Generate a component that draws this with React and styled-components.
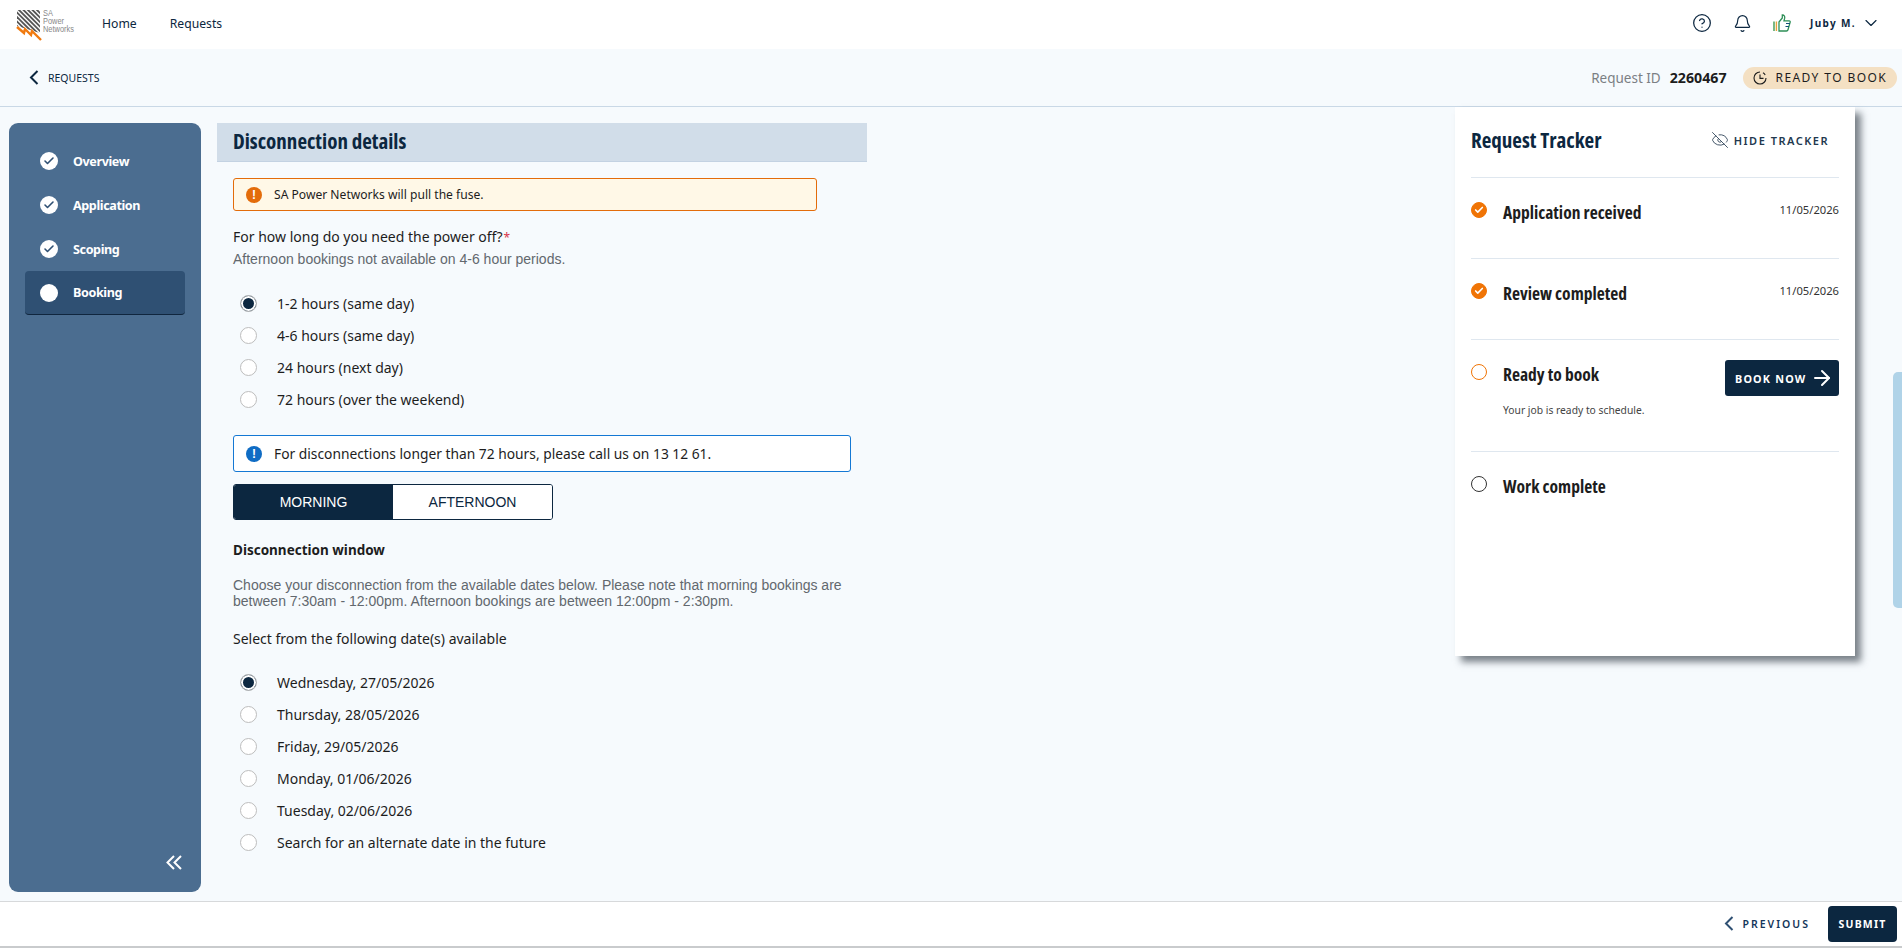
import React from "react";
import styled, { createGlobalStyle } from "styled-components";
import { ArrowRight, Bell, Check, ChevronDown, CircleHelp, EyeOff } from "lucide-react";

const navy = "#0c2740";
const condensed = '"Open Sans", "Noto Sans", sans-serif';
const body = '"Noto Sans", sans-serif';
const arial = '"Liberation Sans", sans-serif';

const GlobalStyle = createGlobalStyle`
    html, body {
        margin: 0;
        height: 100%;
        overflow: hidden;
    }
    body {
        background: #f6fafd;
        font-family: ${body};
        color: #1d1d1d;
    }
    * {
        box-sizing: border-box;
    }
`;

const durations = ["1-2 hours (same day)", "4-6 hours (same day)", "24 hours (next day)", "72 hours (over the weekend)"];
const dates = [
    "Wednesday, 27/05/2026",
    "Thursday, 28/05/2026",
    "Friday, 29/05/2026",
    "Monday, 01/06/2026",
    "Tuesday, 02/06/2026",
    "Search for an alternate date in the future",
];
const steps = ["Overview", "Application", "Scoping"];

const Logo = () => (
    <LogoWrap>
        <svg width="26" height="32" viewBox="0 0 26 32">
            <defs>
                <clipPath id="logoClip">
                    <path d="M1 1 H24 V24 L1 17 Z" />
                </clipPath>
            </defs>
            <g clipPath="url(#logoClip)" stroke="#555" strokeWidth="1.9">
                {[-16, -11.5, -7, -2.5, 2, 6.5, 11, 15.5, 20].map((x) => (
                    <line key={x} x1={x} y1="0" x2={x + 26} y2="26" />
                ))}
            </g>
            <path d="M1 18 L8 24 L9 20 L15 26 L16 22 L25 31" fill="none" stroke="#f07a10" strokeWidth="2.4" />
        </svg>
        <LogoText>
            SA
            <br />
            Power
            <br />
            Networks
        </LogoText>
    </LogoWrap>
);

const BackChevron = ({ color }) => (
    <svg width="10" height="15" viewBox="0 0 10 15" fill="none" stroke={color} strokeWidth="2">
        <path d="M8.5 1 L2 7.5 L8.5 14" />
    </svg>
);

const DoubleChevron = () => (
    <svg width="16" height="15" viewBox="0 0 16 15" fill="none" stroke="#fff" strokeWidth="2">
        <path d="M8 1 L1.5 7.5 L8 14" />
        <path d="M15 1 L8.5 7.5 L15 14" />
    </svg>
);

const ThumbIcon = () => (
    <svg width="18" height="18" viewBox="0 0 18 18" fill="none">
        <path d="M1 7.5 V17" stroke="#3f9a52" strokeWidth="1.4" />
        <path d="M3.4 7.5 V17" stroke="#e8a33c" strokeWidth="1.4" />
        <path
            d="M6 8 L9.3 4 V1 C11.4 1 12 2.6 11.6 4.4 L11 6.8 H16.2 C17 6.8 17.4 7.6 17.1 8.4 L15 15.8 C14.8 16.5 14.3 17 13.5 17 H6 Z"
            stroke="#2e8f57"
            strokeWidth="1.3"
        />
        <path d="M13 9.5 H17 M12.5 12.5 H16" stroke="#14507a" strokeWidth="1.1" />
    </svg>
);

const ClockIcon = () => (
    <svg width="14" height="14" viewBox="0 0 14 14" fill="none" stroke="#1d1d1d" strokeWidth="1.1">
        <path d="M7 1 A6 6 0 1 0 13 7" />
        <path d="M7 3.5 V7.4 H10.5" />
        <path d="M10 1.8 A6 6 0 0 1 12.2 4" />
    </svg>
);

const Radio = ({ label, checked }) => (
    <RadioRow>
        <RadioDot $checked={checked} />
        <span>{label}</span>
    </RadioRow>
);

const TrackerStep = ({ title, date, state, note, action }) => (
    <StepRow $tall={!!note}>
        <StepMark $state={state}>{state === "done" && <Check size={10} strokeWidth={4} color="#fff" />}</StepMark>
        <StepBody>
            <StepHead>
                <StepTitle>{title}</StepTitle>
                {date && <StepDate>{date}</StepDate>}
                {action}
            </StepHead>
            {note && <StepNote>{note}</StepNote>}
        </StepBody>
    </StepRow>
);

export default function App() {
    return (
        <Page>
            <GlobalStyle />
            <TopNav>
                <Logo />
                <NavLink>Home</NavLink>
                <NavLink>Requests</NavLink>
                <NavRight>
                    <NavIcon>
                        <CircleHelp size={20} strokeWidth={1.5} color={navy} />
                    </NavIcon>
                    <NavIcon>
                        <Bell size={19} strokeWidth={1.5} color={navy} />
                    </NavIcon>
                    <NavIcon>
                        <ThumbIcon />
                    </NavIcon>
                    <UserName>Juby M.</UserName>
                    <ChevronDown size={20} strokeWidth={1.4} color={navy} />
                </NavRight>
            </TopNav>

            <SubHeader>
                <BackLink>
                    <BackChevron color={navy} />
                    REQUESTS
                </BackLink>
                <RequestInfo>
                    <RequestLabel>Request ID</RequestLabel>
                    <RequestId>2260467</RequestId>
                    <StatusPill>
                        <ClockIcon />
                        READY TO BOOK
                    </StatusPill>
                </RequestInfo>
            </SubHeader>

            <Main>
                <Sidebar>
                    <StepList>
                        {steps.map((step) => (
                            <SideItem key={step}>
                                <SideMark>
                                    <Check size={12} strokeWidth={3.2} color="#2f5073" />
                                </SideMark>
                                {step}
                            </SideItem>
                        ))}
                        <SideItem $active>
                            <SideMark />
                            Booking
                        </SideItem>
                    </StepList>
                    <Collapse>
                        <DoubleChevron />
                    </Collapse>
                </Sidebar>

                <Content>
                    <SectionHeader>Disconnection details</SectionHeader>
                    <FormBody>
                        <Alert $kind="warning">
                            <AlertIcon $kind="warning">!</AlertIcon>
                            SA Power Networks will pull the fuse.
                        </Alert>
                        <Question>
                            For how long do you need the power off?<Required>*</Required>
                        </Question>
                        <Hint>Afternoon bookings not available on 4-6 hour periods.</Hint>
                        <RadioGroup $top={18}>
                            {durations.map((label, i) => (
                                <Radio key={label} label={label} checked={i === 0} />
                            ))}
                        </RadioGroup>
                        <Alert $kind="info">
                            <AlertIcon $kind="info">!</AlertIcon>
                            For disconnections longer than 72 hours, please call us on 13 12 61.
                        </Alert>
                        <Toggle>
                            <ToggleOption $active>MORNING</ToggleOption>
                            <ToggleOption>AFTERNOON</ToggleOption>
                        </Toggle>
                        <WindowTitle>Disconnection window</WindowTitle>
                        <Description>
                            Choose your disconnection from the available dates below. Please note that morning bookings are
                            between 7:30am - 12:00pm. Afternoon bookings are between 12:00pm - 2:30pm.
                        </Description>
                        <SelectLabel>Select from the following date(s) available</SelectLabel>
                        <RadioGroup $top={17}>
                            {dates.map((label, i) => (
                                <Radio key={label} label={label} checked={i === 0} />
                            ))}
                        </RadioGroup>
                    </FormBody>
                </Content>

                <Tracker>
                    <TrackerHead>
                        <TrackerTitle>Request Tracker</TrackerTitle>
                        <HideButton>
                            <EyeOff size={18} strokeWidth={1.2} color="#33475b" />
                            HIDE TRACKER
                        </HideButton>
                    </TrackerHead>
                    <TrackerStep title="Application received" date="11/05/2026" state="done" />
                    <TrackerStep title="Review completed" date="11/05/2026" state="done" />
                    <TrackerStep
                        title="Ready to book"
                        state="current"
                        note="Your job is ready to schedule."
                        action={
                            <BookButton>
                                BOOK NOW
                                <ArrowRight size={24} strokeWidth={2} />
                            </BookButton>
                        }
                    />
                    <TrackerStep title="Work complete" state="todo" />
                </Tracker>
            </Main>

            <Footer>
                <PreviousButton>
                    <BackChevron color="#2f5073" />
                    PREVIOUS
                </PreviousButton>
                <SubmitButton>SUBMIT</SubmitButton>
            </Footer>
            <ScrollThumb />
        </Page>
    );
}

const Page = styled.div`
    position: relative;
    display: flex;
    flex-direction: column;
    height: 948px;
    width: 1902px;
    overflow: hidden;
`;

const TopNav = styled.header`
    display: flex;
    align-items: center;
    height: 49px;
    background: #fff;
    padding: 0 21px 3px 16px;
`;

const LogoWrap = styled.div`
    display: flex;
    align-items: flex-start;
    gap: 1px;
    width: 86px;
    margin-top: 3px;
`;

const LogoText = styled.div`
    font-family: ${arial};
    font-size: 9.5px;
    line-height: 8px;
    color: #888;
    transform: scaleX(0.78);
    transform-origin: left center;
`;

const NavLink = styled.a`
    font-size: 12.2px;
    color: ${navy};
    margin-right: 33px;
`;

const NavRight = styled.div`
    display: flex;
    align-items: center;
    margin-left: auto;
`;

const NavIcon = styled.span`
    display: flex;
    margin-right: 21px;
`;

const UserName = styled.span`
    font-size: 10px;
    font-weight: 700;
    letter-spacing: 1.35px;
    color: ${navy};
    margin: 0 5px 0 -2px;
`;

const SubHeader = styled.div`
    display: flex;
    align-items: center;
    justify-content: space-between;
    height: 58px;
    padding: 0 5px 0 29px;
    border-bottom: 1px solid #c9d8e6;
`;

const BackLink = styled.a`
    display: flex;
    align-items: center;
    gap: 9px;
    font-size: 10.5px;
    color: ${navy};
`;

const RequestInfo = styled.div`
    display: flex;
    align-items: center;
`;

const RequestLabel = styled.span`
    font-size: 13.5px;
    color: #7b7f84;
    margin-right: 9px;
`;

const RequestId = styled.span`
    font-size: 14.2px;
    font-weight: 700;
    margin-right: 16px;
`;

const StatusPill = styled.span`
    display: flex;
    align-items: center;
    gap: 9px;
    height: 22px;
    padding: 0 10px;
    border-radius: 11px;
    background: #f4e0c3;
    font-size: 12px;
    letter-spacing: 1.4px;
`;

const Main = styled.main`
    flex: 1;
    display: flex;
    align-items: flex-start;
    min-height: 0;
`;

const Sidebar = styled.nav`
    display: flex;
    flex-direction: column;
    justify-content: space-between;
    width: 192px;
    height: 769px;
    margin: 16px 16px 0 9px;
    padding: 16px 16px 22px;
    background: #4b6d90;
    border-radius: 9px;
`;

const StepList = styled.div`
    display: flex;
    flex-direction: column;
`;

const SideItem = styled.div`
    display: flex;
    align-items: center;
    gap: 15px;
    height: 44px;
    padding-left: 15px;
    border-radius: 4px;
    font-size: 12.6px;
    font-weight: 700;
    letter-spacing: -0.4px;
    color: #fff;
    ${(props) => props.$active && `background: #2f5073; border-bottom: 1px solid #10263e;`}
`;

const SideMark = styled.span`
    display: flex;
    align-items: center;
    justify-content: center;
    width: 18px;
    height: 18px;
    border-radius: 50%;
    background: #fff;
`;

const Collapse = styled.div`
    display: flex;
    justify-content: flex-end;
    margin-right: 3px;
`;

const Content = styled.section`
    width: 650px;
    margin-top: 16px;
`;

const SectionHeader = styled.h2`
    height: 39px;
    margin: 0;
    padding-left: 16px;
    line-height: 36px;
    font-family: ${condensed};
    font-stretch: 75%;
    font-size: 21px;
    font-weight: 700;
    color: ${navy};
    background: #d1dde9;
    border-bottom: 1px solid #c3d2e2;
`;

const FormBody = styled.div`
    padding: 16px 0 0 16px;
`;

const Alert = styled.div`
    display: flex;
    align-items: center;
    font-size: ${(props) => (props.$kind === "info" ? "13.8px" : "12.1px")};
    color: #1d1d1d;
    border: 1px solid ${(props) => (props.$kind === "info" ? "#1478d4" : "#e36c0a")};
    border-radius: 3px;
    background: ${(props) => (props.$kind === "info" ? "#fff" : "#fff8e7")};
    width: ${(props) => (props.$kind === "info" ? "618px" : "584px")};
    height: ${(props) => (props.$kind === "info" ? "37px" : "33px")};
    margin-bottom: ${(props) => (props.$kind === "info" ? "12px" : "0")};
    padding-left: 12px;
    gap: 12px;
`;

const AlertIcon = styled.span`
    display: flex;
    align-items: center;
    justify-content: center;
    width: 16px;
    height: 16px;
    border-radius: 50%;
    background: ${(props) => (props.$kind === "info" ? "#0f6cc4" : "#e36c0a")};
    color: #fff;
    font-family: ${arial};
    font-size: 12px;
    font-weight: 700;
`;

const Question = styled.div`
    margin-top: 16px;
    font-size: 14px;
    line-height: 20px;
`;

const Required = styled.span`
    color: #d8344a;
    font-size: 12px;
    margin-left: 1px;
`;

const Hint = styled.div`
    font-family: ${arial};
    font-size: 14px;
    line-height: 20px;
    color: #62686e;
    margin-top: 1px;
`;

const RadioGroup = styled.div`
    display: flex;
    flex-direction: column;
    margin-top: ${(props) => props.$top}px;
    margin-bottom: 20px;
`;

const RadioRow = styled.label`
    display: flex;
    align-items: center;
    height: 32px;
    padding-left: 7px;
    font-size: 14px;
    gap: 20px;
`;

const RadioDot = styled.span`
    width: 17px;
    height: 17px;
    border-radius: 50%;
    border: 1px solid #bdbdbd;
    background: ${(props) => (props.$checked ? navy : "#fff")};
    box-shadow: ${(props) => (props.$checked ? "inset 0 0 0 2px #fff" : "none")};
`;

const Toggle = styled.div`
    display: flex;
    width: 320px;
    height: 36px;
    border: 1px solid ${navy};
    border-radius: 3px;
    background: #fff;
    overflow: hidden;
`;

const ToggleOption = styled.div`
    flex: 1;
    display: flex;
    align-items: center;
    justify-content: center;
    font-family: ${arial};
    font-size: 14px;
    color: ${(props) => (props.$active ? "#fff" : navy)};
    background: ${(props) => (props.$active ? navy : "#fff")};
`;

const WindowTitle = styled.div`
    margin-top: 20px;
    font-size: 13.5px;
    line-height: 20px;
    font-weight: 700;
`;

const Description = styled.p`
    width: 620px;
    margin: 17px 0 0;
    font-family: ${arial};
    font-size: 14px;
    line-height: 16px;
    color: #62686e;
`;

const SelectLabel = styled.div`
    margin-top: 20px;
    font-size: 14px;
    line-height: 20px;
`;

const Tracker = styled.aside`
    width: 400px;
    height: 549px;
    margin-left: 588px;
    padding: 16px 16px 0;
    background: #fff;
    box-shadow: 6px 6px 7px rgba(40, 50, 60, 0.6);
`;

const TrackerHead = styled.div`
    display: flex;
    align-items: center;
    justify-content: space-between;
    height: 54px;
    padding: 0 10px 20px 0;
`;

const TrackerTitle = styled.h3`
    margin: 0;
    font-family: ${condensed};
    font-stretch: 75%;
    font-size: 21px;
    font-weight: 700;
    color: ${navy};
`;

const HideButton = styled.span`
    display: flex;
    align-items: center;
    gap: 5px;
    font-size: 11px;
    font-weight: 600;
    letter-spacing: 1.5px;
    color: #22384e;
`;

const StepRow = styled.div`
    display: flex;
    gap: 16px;
    height: ${(props) => (props.$tall ? "112px" : "81px")};
    padding-top: 24px;
    border-top: 1px solid #dfe7ef;
`;

const stepColors = { done: "#f07405", current: "#f07405", todo: "#333" };

const StepMark = styled.span`
    flex: none;
    display: flex;
    align-items: center;
    justify-content: center;
    width: 16px;
    height: 16px;
    border-radius: 50%;
    border: 1px solid ${(props) => stepColors[props.$state]};
    background: ${(props) => (props.$state === "done" ? stepColors.done : "#fff")};
`;

const StepBody = styled.div`
    flex: 1;
`;

const StepHead = styled.div`
    display: flex;
    justify-content: space-between;
    position: relative;
`;

const StepTitle = styled.div`
    font-family: ${condensed};
    font-stretch: 75%;
    font-size: 17.5px;
    font-weight: 700;
    line-height: 20px;
    color: #1d1d1d;
`;

const StepDate = styled.div`
    font-size: 11.2px;
    line-height: 16px;
    color: #333;
`;

const StepNote = styled.div`
    margin-top: 19px;
    font-size: 10.3px;
    color: #444;
`;

const BookButton = styled.button`
    position: absolute;
    right: 0;
    top: -4px;
    display: flex;
    align-items: center;
    gap: 3px;
    width: 114px;
    height: 36px;
    padding: 0 0 0 10px;
    border: none;
    border-radius: 3px;
    background: ${navy};
    color: #fff;
    font-family: ${body};
    font-size: 10.8px;
    font-weight: 700;
    letter-spacing: 1.2px;
`;

const Footer = styled.footer`
    display: flex;
    align-items: center;
    justify-content: flex-end;
    gap: 18px;
    height: 47px;
    margin-bottom: 0;
    padding: 0 5px 1px 0;
    background: #fff;
    border-top: 1px solid #d7d9db;
    border-bottom: 2px solid #c9cbcd;
`;

const PreviousButton = styled.span`
    display: flex;
    align-items: center;
    gap: 9px;
    font-size: 10.5px;
    font-weight: 600;
    letter-spacing: 2px;
    color: #14365a;
`;

const SubmitButton = styled.button`
    width: 69px;
    height: 36px;
    border: none;
    border-radius: 4px;
    background: ${navy};
    color: #fff;
    font-family: ${body};
    font-size: 10.5px;
    font-weight: 700;
    letter-spacing: 1.2px;
`;

const ScrollThumb = styled.div`
    position: absolute;
    right: 0;
    top: 372px;
    width: 9px;
    height: 236px;
    background: #b0d3e8;
    border-radius: 5px 0 0 5px;
`;
